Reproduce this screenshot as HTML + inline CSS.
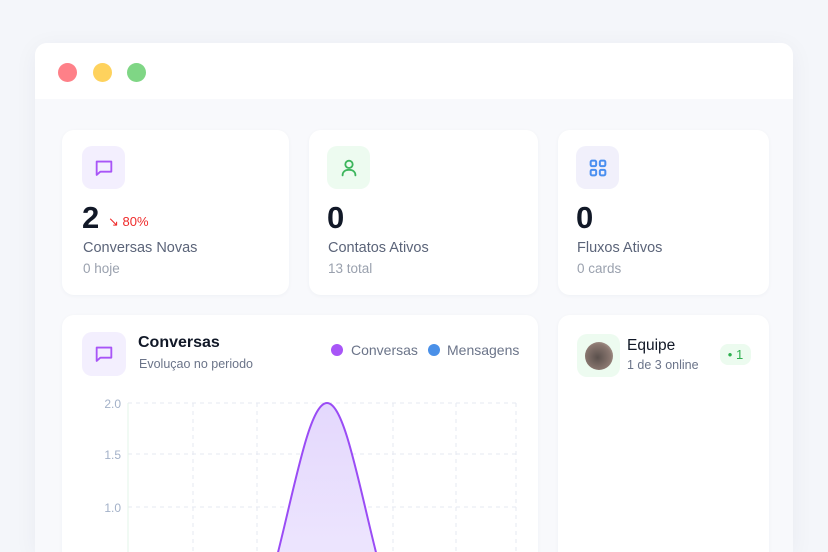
<!DOCTYPE html>
<html><head><meta charset="utf-8"><style>
*{box-sizing:border-box;margin:0;padding:0}
html,body{width:828px;height:552px;overflow:hidden}
body{background:#f4f6fa;font-family:"Liberation Sans",sans-serif;position:relative}
.win{position:absolute;left:35px;top:43px;width:758px;height:509px;background:#f8f9fc;border-radius:12px 12px 0 0;overflow:hidden;box-shadow:0 4px 24px rgba(30,40,80,.05)}
.bar{height:56px;background:#fff}
.dot{position:absolute;top:20px;width:19px;height:19px;border-radius:50%}
.card{position:absolute;background:#fff;border-radius:12px;box-shadow:0 1px 4px rgba(30,40,80,.04)}
.ic{position:absolute;width:43px;height:43px;border-radius:10px;display:flex;align-items:center;justify-content:center}
.num{position:absolute;font-size:31px;color:#111827;font-weight:bold}
.lbl{position:absolute;font-size:14.5px;color:#5b6479}
.sub{position:absolute;font-size:13.5px;color:#9aa1ae}
</style></head><body>
<div class="win">
<div class="bar"></div>
<div class="dot" style="left:23px;background:#fe8088"></div>
<div class="dot" style="left:58px;background:#fed25d"></div>
<div class="dot" style="left:92px;background:#7fd685"></div>
</div>

<div class="card" style="left:62px;top:130px;width:227px;height:165px">
<div class="ic" style="left:20px;top:16px;background:#f3effe"><svg width="22" height="22" viewBox="0 0 24 24" fill="none" stroke="#a855f7" stroke-width="2" stroke-linejoin="round"><path d="M4 5h16v11H8l-4 3.5z"/></svg></div>
<div class="num" style="left:20px;top:70px">2</div>
<div style="position:absolute;left:46px;top:84px;font-size:13px;color:#ef2b2b">↘ 80%</div>
<div class="lbl" style="left:21px;top:110px">Conversas Novas</div>
<div class="sub" style="left:21px;top:131px">0 hoje</div>
</div>

<div class="card" style="left:309px;top:130px;width:229px;height:165px">
<div class="ic" style="left:18px;top:16px;background:#edfbf0"><svg width="22" height="22" viewBox="0 0 24 24" fill="none" stroke="#3cb55c" stroke-width="2" stroke-linecap="round"><circle cx="12" cy="8" r="4"/><path d="M5 20c0-4 3-6 7-6s7 2 7 6"/></svg></div>
<div class="num" style="left:18px;top:70px">0</div>
<div class="lbl" style="left:19px;top:110px">Contatos Ativos</div>
<div class="sub" style="left:19px;top:131px">13 total</div>
</div>

<div class="card" style="left:558px;top:130px;width:211px;height:165px">
<div class="ic" style="left:18px;top:16px;background:#f1f0fb"><svg width="22" height="22" viewBox="0 0 24 24" fill="none" stroke="#4a8ff0" stroke-width="2.2"><rect x="4" y="4" width="6" height="6" rx="1.5"/><rect x="14" y="4" width="6" height="6" rx="1.5"/><rect x="4" y="14" width="6" height="6" rx="1.5"/><rect x="14" y="14" width="6" height="6" rx="1.5"/></svg></div>
<div class="num" style="left:18px;top:70px">0</div>
<div class="lbl" style="left:19px;top:110px">Fluxos Ativos</div>
<div class="sub" style="left:19px;top:131px">0 cards</div>
</div>

<div class="card" style="left:62px;top:315px;width:476px;height:250px">
<div class="ic" style="left:20px;top:17px;background:#f3effe;width:44px;height:44px"><svg width="22" height="22" viewBox="0 0 24 24" fill="none" stroke="#a855f7" stroke-width="2" stroke-linejoin="round"><path d="M4 5h16v11H8l-4 3.5z"/></svg></div>
<div style="position:absolute;left:76px;top:19px;font-size:16px;font-weight:bold;color:#111827">Conversas</div>
<div style="position:absolute;left:77px;top:42px;font-size:12.5px;color:#6b7489">Evoluçao no periodo</div>
<div style="position:absolute;left:269px;top:29px;width:12px;height:12px;border-radius:50%;background:#a855f7"></div>
<div style="position:absolute;left:289px;top:27px;font-size:14px;color:#6b7489">Conversas</div>
<div style="position:absolute;left:366px;top:29px;width:12px;height:12px;border-radius:50%;background:#4a90e8"></div>
<div style="position:absolute;left:385px;top:27px;font-size:14px;color:#6b7489">Mensagens</div>
</div>

<svg style="position:absolute;left:0;top:0" width="828" height="552">
<defs><linearGradient id="g" x1="0" y1="0" x2="0" y2="1"><stop offset="0" stop-color="#e4d8fd"/><stop offset="1" stop-color="#f3eefe"/></linearGradient></defs>
<g stroke="#e6e9f2" stroke-dasharray="4 4" stroke-width="1">
<line x1="128" y1="403" x2="516" y2="403"/><line x1="128" y1="454" x2="516" y2="454"/><line x1="128" y1="507" x2="516" y2="507"/>
<line x1="193" y1="403" x2="193" y2="552"/><line x1="257" y1="403" x2="257" y2="552"/><line x1="327" y1="403" x2="327" y2="552"/><line x1="393" y1="403" x2="393" y2="552"/><line x1="456" y1="403" x2="456" y2="552"/><line x1="516" y1="403" x2="516" y2="552"/>
</g>
<line x1="128" y1="403" x2="128" y2="552" stroke="#e3f5e8"/>
<g font-family="Liberation Sans" font-size="12" fill="#a3b1c8" text-anchor="end">
<text x="121" y="408">2.0</text><text x="121" y="459">1.5</text><text x="121" y="512">1.0</text></g>
<path d="M225,660 C275,660 296,403 327,403 C358,403 379,660 429,660 Z" fill="url(#g)"/>
<path d="M225,660 C275,660 296,403 327,403 C358,403 379,660 429,660" fill="none" stroke="#9a4cf5" stroke-width="2"/>
</svg>

<div class="card" style="left:558px;top:315px;width:211px;height:250px">
<div class="ic" style="left:19px;top:19px;background:#edfbf0"><div style="width:28px;height:28px;border-radius:50%;background:radial-gradient(circle at 45% 55%,#5a504c,#8a7770 60%,#cdbdb5)"></div></div>
<div style="position:absolute;left:69px;top:22px;font-size:15.5px;color:#111827">Equipe</div>
<div style="position:absolute;left:69px;top:43px;font-size:12.5px;color:#6b7489">1 de 3 online</div>
<div style="position:absolute;left:162px;top:29px;width:31px;height:21px;border-radius:8px;background:#ecfbef;color:#2eb04f;font-size:13px;text-align:center;line-height:21px">• 1</div>
</div>
</body></html>
